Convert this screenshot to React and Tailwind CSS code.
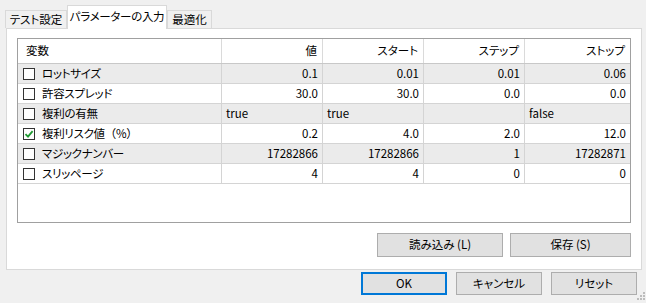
import React from 'react';

const columns = ['値', 'スタート', 'ステップ', 'ストップ'];

const rows = [
  { name: 'ロットサイズ', checked: false, values: ['0.1', '0.01', '0.01', '0.06'] },
  { name: '許容スプレッド', checked: false, values: ['30.0', '30.0', '0.0', '0.0'] },
  { name: '複利の有無', checked: false, values: ['true', 'true', '', 'false'], left: true },
  { name: '複利リスク値', suffix: '（%）', checked: true, values: ['0.2', '4.0', '2.0', '12.0'] },
  { name: 'マジックナンバー', checked: false, values: ['17282866', '17282866', '1', '17282871'] },
  { name: 'スリッページ', checked: false, values: ['4', '4', '0', '0'] },
];

const colW = ['w-[101px]', 'w-[101px]', 'w-[101px]', 'w-[105px]'];

const CheckBox = ({ checked }) => (
  <span className="w-[12px] h-[12px] border border-[#333] bg-white flex items-center justify-center shrink-0">
    {checked && (
      <svg width="10" height="10" viewBox="0 0 10 10">
        <path d="M1.5 5.2 L4 7.6 L8.6 2.2" fill="none" stroke="#1f9a32" strokeWidth="1.8" />
      </svg>
    )}
  </span>
);

const Button = ({ children, className = '', focused = false }) => (
  <div
    className={`flex items-center justify-center bg-[#e1e1e1] ${
      focused ? 'border-2 border-[#0078d7]' : 'border border-[#adadad]'
    } ${className}`}
  >
    {children}
  </div>
);

export default function App() {
  return (
    <div className="w-[646px] h-[303px] bg-[#f0f0f0] relative text-[11.5px] text-black font-['Meiryo_UI','Noto_Sans_CJK_JP',sans-serif] [font-feature-settings:'palt'] leading-none overflow-hidden">
      {/* tabs */}
      <div className="flex items-end h-[28px] pl-[5px] whitespace-nowrap">
        <div className="h-[18px] w-[62px] border border-b-0 border-[#d9d9d9] bg-[#f0f0f0] flex items-center justify-center">
          テスト設定
        </div>
        <div className="relative z-10 -mb-px h-[24px] w-[100px] border border-b-0 border-[#d9d9d9] bg-white flex items-center justify-center pb-[2px] tracking-[-0.3px]">
          パラメーターの入力
        </div>
        <div className="h-[18px] w-[45px] border border-b-0 border-[#d9d9d9] bg-[#f0f0f0] flex items-center justify-center">
          最適化
        </div>
      </div>

      {/* panel */}
      <div className="ml-[6px] w-[636px] h-[242px] border border-[#d9d9d9] bg-white pl-[10px] pt-[9px]">
        <div className="w-[614px] h-[185px] border border-[#a0a0a0] bg-white">
          <div className="flex h-[25px] border-b border-[#c8c8c8]">
            <div className="w-[204px] border-r border-[#dadada] flex items-center pl-[8px]">変数</div>
            {columns.map((c, i) => (
              <div
                key={c}
                className={`${colW[i]} ${i < 3 ? 'border-r border-[#dadada]' : ''} flex items-center justify-end pr-[5px]`}
              >
                {c}
              </div>
            ))}
          </div>
          {rows.map((r, ri) => (
            <div
              key={r.name}
              className={`flex h-[20px] border-b border-[#d4d4d4] ${ri % 2 === 0 ? 'bg-[#ebebeb]' : 'bg-white'}`}
            >
              <div className="w-[204px] border-r border-[#d4d4d4] flex items-center pl-[5px] gap-[7px]">
                <CheckBox checked={r.checked} />
                <span className="whitespace-nowrap tracking-[-0.3px]">
                  {r.name}
                  {r.suffix && <span className="[font-feature-settings:normal]">{r.suffix}</span>}
                </span>
              </div>
              {r.values.map((v, i) => (
                <div
                  key={i}
                  className={`${colW[i]} ${i < 3 ? 'border-r border-[#d4d4d4]' : ''} flex items-center ${
                    r.left ? 'justify-start pl-[4px]' : 'justify-end pr-[4px]'
                  }`}
                >
                  {v}
                </div>
              ))}
            </div>
          ))}
        </div>

        <div className="flex justify-end gap-[7px] mt-[10px] w-[614px]">
          <Button className="w-[126px] h-[24px]">読み込み (L)</Button>
          <Button className="w-[121px] h-[24px]">保存 (S)</Button>
        </div>
      </div>

      {/* dialog buttons */}
      <div className="flex justify-end gap-[9px] mt-[2px] pr-[9px]">
        <Button focused className="w-[86px] h-[23px]">OK</Button>
        <Button className="w-[86px] h-[23px]">キャンセル</Button>
        <Button className="w-[86px] h-[23px]">リセット</Button>
      </div>

      {/* size grip */}
      <svg className="absolute right-[1px] bottom-[1px]" width="10" height="10" viewBox="0 0 10 10">
        {[[8, 0], [8, 3], [5, 3], [8, 6], [5, 6], [2, 6]].map(([x, y], i) => (
          <rect key={i} x={x} y={y} width="2" height="2" fill="#bcbcbc" />
        ))}
      </svg>
    </div>
  );
}
